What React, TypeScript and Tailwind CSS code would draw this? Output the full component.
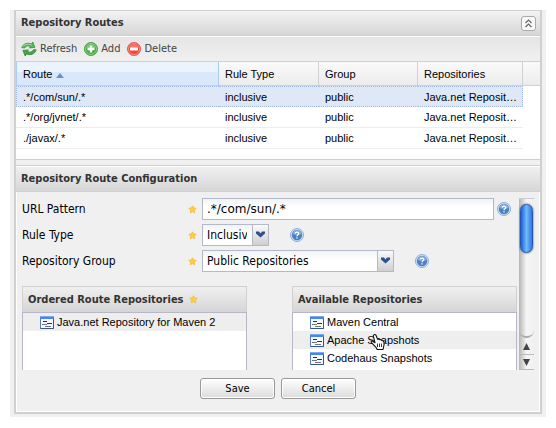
import type { ReactNode } from 'react';

const titleText =
  "font-['DejaVu_Sans_Condensed','DejaVu_Sans',sans-serif] [font-stretch:condensed] text-[11px] leading-[16px] font-bold text-[#333]";
const condensed = "font-['DejaVu_Sans_Condensed','DejaVu_Sans',sans-serif] [font-stretch:condensed] leading-[16px]";
const fieldBox = 'h-[22px] border border-[#b5b8c8] bg-white bg-linear-to-b from-[#f0f4f4] to-white to-40% text-black outline-none';

const routes = ['.*/com/sun/.*', '.*/org/jvnet/.*', './javax/.*'];

function RefreshIcon() {
  return (
    <svg width="16" height="16" viewBox="0 0 16 16" aria-hidden="true">
      <path d="M.8 6.700C2 2.800 6.400 1.100 10.500 3l1.300-2 2.100 5.300-5.400.7 1-1.500C7 4.300 4.800 4.800 3.700 7Z" fill="#55b957" stroke="#3a8f40" strokeWidth=".8" strokeLinejoin="round" />
      <path d="M15.200 8.800C14 13.200 9.600 14.700 5.500 12.900L4.200 15 1.900 9.400l5.500-.5-1 1.600c2.600 1.200 4.900.7 6-1.700Z" fill="#42a947" stroke="#2f8437" strokeWidth=".8" strokeLinejoin="round" />
      <path d="M2.200 5.400C4 3 7.500 2.600 10.600 4.100" fill="none" stroke="#b5e8ac" strokeWidth=".8" />
    </svg>
  );
}

function CircleIcon({ minus = false }: { minus?: boolean }) {
  return (
    <svg width="14" height="14" viewBox="0 0 14 14" aria-hidden="true">
      <circle cx="7" cy="7" r="6.500" fill={minus ? '#f0453b' : '#45aa43'} stroke={minus ? '#d9564e' : '#3f9a3d'} strokeWidth=".9" />
      <circle cx="7" cy="7" r="5.500" fill="none" stroke={minus ? '#ff9a8e' : '#a1dc96'} strokeWidth=".8" />
      <path d="M2.500 6C3 3.500 5 2 7 2s4 1.500 4.500 4" fill={minus ? '#fa7366' : '#77c76f'} />
      {minus ? (
        <rect x="3" y="5.500" width="8" height="3" rx=".6" fill="#fff" />
      ) : (
        <path d="M5.800 3.500h2.400v2.300h2.300v2.400H8.200v2.300H5.800V8.200H3.500V5.800h2.300Z" fill="#fff" />
      )}
    </svg>
  );
}

function Star() {
  return (
    <svg className="shrink-0" width="9" height="9" viewBox="0 0 9 9" role="img" aria-label="required">
      <path d="m4.500.8 1.100 2.100 2.500.4-1.800 1.900.4 2.600-2.200-1.200-2.200 1.200.4-2.600L.9 3.300l2.500-.4Z" fill="#fdd03c" stroke="#f5b93a" strokeWidth=".8" strokeLinejoin="round" />
    </svg>
  );
}

function Help() {
  return (
    <button type="button" aria-label="Help" className="shrink-0">
      <svg className="block" width="14" height="14" viewBox="0 0 14 14">
        <circle cx="7" cy="7" r="6.500" fill="#d5e5f5" stroke="#7fa6d2" strokeWidth=".9" />
        <circle cx="7" cy="7" r="5.200" fill="#4a80c0" />
        <path d="M2.200 6a4.900 4.900 0 0 1 9.600 0C9 7.200 5 7.200 2.200 6Z" fill="#7da8d8" />
        <path d="M5.200 5.600C5.200 3.800 8.800 3.600 8.800 5.500 8.800 6.800 7 6.800 7 8.200M7 9.200v1.300" fill="none" stroke="#fff" strokeWidth="1.300" />
      </svg>
    </button>
  );
}

function RepoIcon() {
  return (
    <svg className="shrink-0" width="14" height="13" viewBox="0 0 14 13" aria-hidden="true">
      <path d="M.5.500h13v12H.5Z" fill="#f5f9ff" stroke="#5a7eb8" />
      <path d="M0 0h14v3H0Z" fill="#4c83e6" />
      <path d="M0 0h14v1H0Z" fill="#79a8f5" />
      <path d="M13.500 3v9.500H.5" fill="none" stroke="#36568f" />
      <path d="M3 5.500h4M7 7.500h5" stroke="#333" />
      <path d="M2 8.500h5M5 10.500h6" stroke="#666" strokeWidth=".9" />
    </svg>
  );
}

function Pointer() {
  return (
    <svg className="pointer-events-none absolute top-[3px] left-[77px]" width="15" height="17" viewBox="0 0 15 17" aria-hidden="true">
      <path d="M4.200.7c1-.4 1.700.2 2 1l1.400 3.600 1.200-.3 1 .8 1.300-.2.9 1 1.200.1.700 1.200.2 2.500-.6 2.600-.4 2.500H7.200L6 13.300 1.500 8.600C.6 7.500 1.700 6.500 2.800 7.200L5 8.700 3.400 2.300C3.200 1.500 3.500 1 4.200.7Z" fill="#fff" stroke="#111" strokeWidth="1.100" strokeLinejoin="round" />
      <path d="M7.500 9.500v3.500M9.500 9.500v3.500M11.500 9.500v3.500" stroke="#222" strokeWidth=".9" />
    </svg>
  );
}

function Combo({ id, value, width }: { id: string; value: string; width: string }) {
  return (
    <div className={`relative shrink-0 ${width}`}>
      <select id={id} className={`${fieldBox} ${condensed} block w-full appearance-none pr-[21px] pl-1 text-[12px]`}>
        <option>{value}</option>
      </select>
      <span className="pointer-events-none absolute inset-y-px right-px w-4 border-l border-[#b5b8c8] bg-linear-to-b from-[#fafafa] to-[#cfcfcf]">
        <svg className="block" width="16" height="20" viewBox="0 0 16 20" aria-hidden="true">
          <path d="M3 6.500h3l1.500 2L9 6.500h3v2L7.500 12.500 3 8.500Z" fill="#2d4f91" />
        </svg>
      </span>
    </div>
  );
}

function Field({ id, label, children }: { id: string; label: string; children: ReactNode }) {
  return (
    <div className="flex h-[22px] items-center">
      <label htmlFor={id} className={`${condensed} w-[166px] shrink-0 text-[12px] text-black`}>
        {label}
      </label>
      <Star />
      <div className="ml-[5px] flex min-w-0 flex-1 items-center">{children}</div>
    </div>
  );
}

function RepoList({ title, items, active, required = false, pointer = false }: {
  title: string;
  items: string[];
  active: number;
  required?: boolean;
  pointer?: boolean;
}) {
  return (
    <section className="min-w-0 flex-1">
      <h3 className={`${titleText} flex h-[26px] items-center gap-[6px] border border-b-0 border-[#d0d0d0] bg-linear-to-b from-[#f0f0f0] to-[#d5d5d5] px-[5px]`}>
        {title}
        {required && <Star />}
      </h3>
      <ul className="h-[58px] border border-b-0 border-[#b5b8c8] bg-white">
        {items.map((name, i) => (
          <li
            key={name}
            className={`relative flex h-[18px] items-center gap-[3px] pl-[17px] whitespace-nowrap ${i === active ? 'bg-[#eee]' : ''}`}
          >
            <RepoIcon />
            {name}
            {pointer && i === active && <Pointer />}
          </li>
        ))}
      </ul>
    </section>
  );
}

function Scrollbar() {
  return (
    <div className="flex w-[15px] shrink-0 flex-col border-t border-[#ccc] bg-linear-to-r from-[#b5b5b5] via-[#f5f5f5] to-[#f0f0f0]" aria-hidden="true">
      <div className="mx-px mt-[5px] h-[49px] rounded-full border border-[#2454b8] bg-linear-to-r from-[#1d5fd8] via-[#70b9fb] to-[#2f78df] shadow-[0_0_2px_#333]" />
      <div className="flex-1 rounded-b-full border-b-2 border-[#aaa]" />
      <div className="flex h-[16px] items-center justify-center">
        <svg width="7" height="7" viewBox="0 0 7 7"><path d="M3.500 0 7 7H0Z" fill="#444" /></svg>
      </div>
      <div className="flex h-[16px] items-center justify-center border-y border-[#bbb]">
        <svg width="7" height="7" viewBox="0 0 7 7"><path d="M0 0h7L3.500 7Z" fill="#444" /></svg>
      </div>
    </div>
  );
}

export default function App() {
  const headCell = 'border-r border-[#d0d0d0] px-[6px] text-left font-normal';
  const toolButton = 'flex items-center gap-[3px]';
  const action =
    'h-[21px] w-[75px] rounded-[3px] border border-[#999] bg-linear-to-b from-white to-[#dcdcdc] text-black shadow-[inset_0_0_0_1px_#fff]';

  return (
    <div className="bg-white p-[10px] font-['Liberation_Sans',Arial,sans-serif] text-[11px] leading-[16px] text-black">
      <main className="bg-[#f0f0f0] px-1 pb-[3px]">
        <div className="border-x-2 border-b-2 border-[#d0d0d0]">
          <section className="border-y border-[#d0d0d0]">
            <header className="flex h-[25px] items-center justify-between border-b border-[#d0d0d0] bg-linear-to-b from-[#f3f3f3] to-[#d6d6d6] pr-1 pl-[5px]">
              <h2 className={titleText}>Repository Routes</h2>
              <button type="button" aria-label="Collapse" className="rounded-[3px] border border-[#aaa] bg-[#f8f8f8]">
                <svg className="block" width="13" height="13" viewBox="0 0 13 13">
                  <path d="m3.500 6 3-3 3 3M3.500 10l3-3 3 3" fill="none" stroke="#666" strokeWidth="1.200" />
                </svg>
              </button>
            </header>
            <div className={`${condensed} flex h-[26px] items-center gap-[7px] border-t border-b border-t-white border-b-[#d0d0d0] bg-linear-to-b from-[#e5e5e5] to-[#f0f0f0] pl-[5px] text-[11px] text-[#444]`}>
              <button type="button" className={toolButton}><RefreshIcon />Refresh</button>
              <button type="button" className={toolButton}><CircleIcon />Add</button>
              <button type="button" className={toolButton}><CircleIcon minus />Delete</button>
            </div>
            <div className="bg-white pb-[10px]">
              <table className="w-full table-fixed border-separate border-spacing-0">
                <colgroup>
                  <col />
                  <col className="w-[100px]" />
                  <col className="w-[99px]" />
                  <col className="w-[105px]" />
                  <col className="w-[17px]" />
                </colgroup>
                <thead>
                  <tr className="h-6 bg-linear-to-b from-[#fafafa] to-[#ebebeb] [&>th]:border-b [&>th]:border-b-[#d0d0d0]">
                    <th className="border-x border-x-[#aaccf6] bg-linear-to-b from-[#ebf3fd] from-45% to-[#d9e8fb] to-45% px-[6px] text-left font-normal">
                      <span className="flex items-center gap-1">
                        Route
                        <svg className="mt-1" width="8" height="5" viewBox="0 0 8 5" aria-hidden="true"><path d="m4 0 4 5H0Z" fill="#6593cf" /></svg>
                      </span>
                    </th>
                    <th className={headCell}>Rule Type</th>
                    <th className={headCell}>Group</th>
                    <th className={headCell}>Repositories</th>
                    <th />
                  </tr>
                </thead>
                <tbody>
                  {routes.map((route, i) => (
                    <tr
                      key={route}
                      className={
                        i === 0
                          ? 'h-[21px] [&>td:not(:last-child)]:border-y [&>td:not(:last-child)]:border-dotted [&>td:not(:last-child)]:border-[#a3bae9] [&>td:not(:last-child)]:bg-[#dfe8f6] [&>td:first-child]:border-l [&>td:first-child]:pl-[6px] [&>td:nth-child(4)]:border-r'
                          : 'h-[21px] [&>td:not(:last-child)]:border-b [&>td:not(:last-child)]:border-[#ededed]'
                      }
                    >
                      <td className="px-[7px]">{route}</td>
                      <td className="px-[6px]">inclusive</td>
                      <td className="px-[6px]">public</td>
                      <td className="truncate pr-1 pl-[6px]">Java.net Repository for Maven 2</td>
                      <td />
                    </tr>
                  ))}
                </tbody>
              </table>
            </div>
          </section>

          <section className="mt-[5px] border-t border-[#d0d0d0]">
            <header className="flex h-[26px] items-center border-t border-b border-t-white border-b-[#d0d0d0] bg-linear-to-b from-[#f0f0f0] to-[#d6d6d6] pl-[5px]">
              <h2 className={titleText}>Repository Route Configuration</h2>
            </header>
            <form className="border-x border-b border-white" onSubmit={(e) => e.preventDefault()}>
              <div className="flex gap-[2px] pt-[6px] pr-[5px] pl-[5px]">
                <div className="min-w-0 flex-1">
                  <div className="flex flex-col gap-1">
                    <Field id="pattern" label="URL Pattern">
                      <input
                        id="pattern"
                        defaultValue=".*/com/sun/.*"
                        className={`${fieldBox} mr-[3px] min-w-0 flex-1 px-1 font-['DejaVu_Sans',sans-serif] text-[12px] leading-[16px]`}
                      />
                      <span className="mr-[6px] flex"><Help /></span>
                    </Field>
                    <Field id="rule" label="Rule Type">
                      <Combo id="rule" value="Inclusive" width="mr-[21px] w-[67px]" />
                      <Help />
                    </Field>
                    <Field id="group" label="Repository Group">
                      <Combo id="group" value="Public Repositories" width="mr-[21px] w-[192px]" />
                      <Help />
                    </Field>
                  </div>
                  <div className="mt-[14px] flex gap-[45px]">
                    <RepoList title="Ordered Route Repositories" items={['Java.net Repository for Maven 2']} active={0} required />
                    <RepoList title="Available Repositories" items={['Maven Central', 'Apache Snapshots', 'Codehaus Snapshots']} active={1} pointer />
                  </div>
                </div>
                <Scrollbar />
              </div>
              <div className={`${condensed} flex justify-center gap-[6px] pt-2 pb-[12px] text-[11px]`}>
                <button type="submit" className={action}>Save</button>
                <button type="button" className={action}>Cancel</button>
              </div>
            </form>
          </section>
        </div>
      </main>
    </div>
  );
}
